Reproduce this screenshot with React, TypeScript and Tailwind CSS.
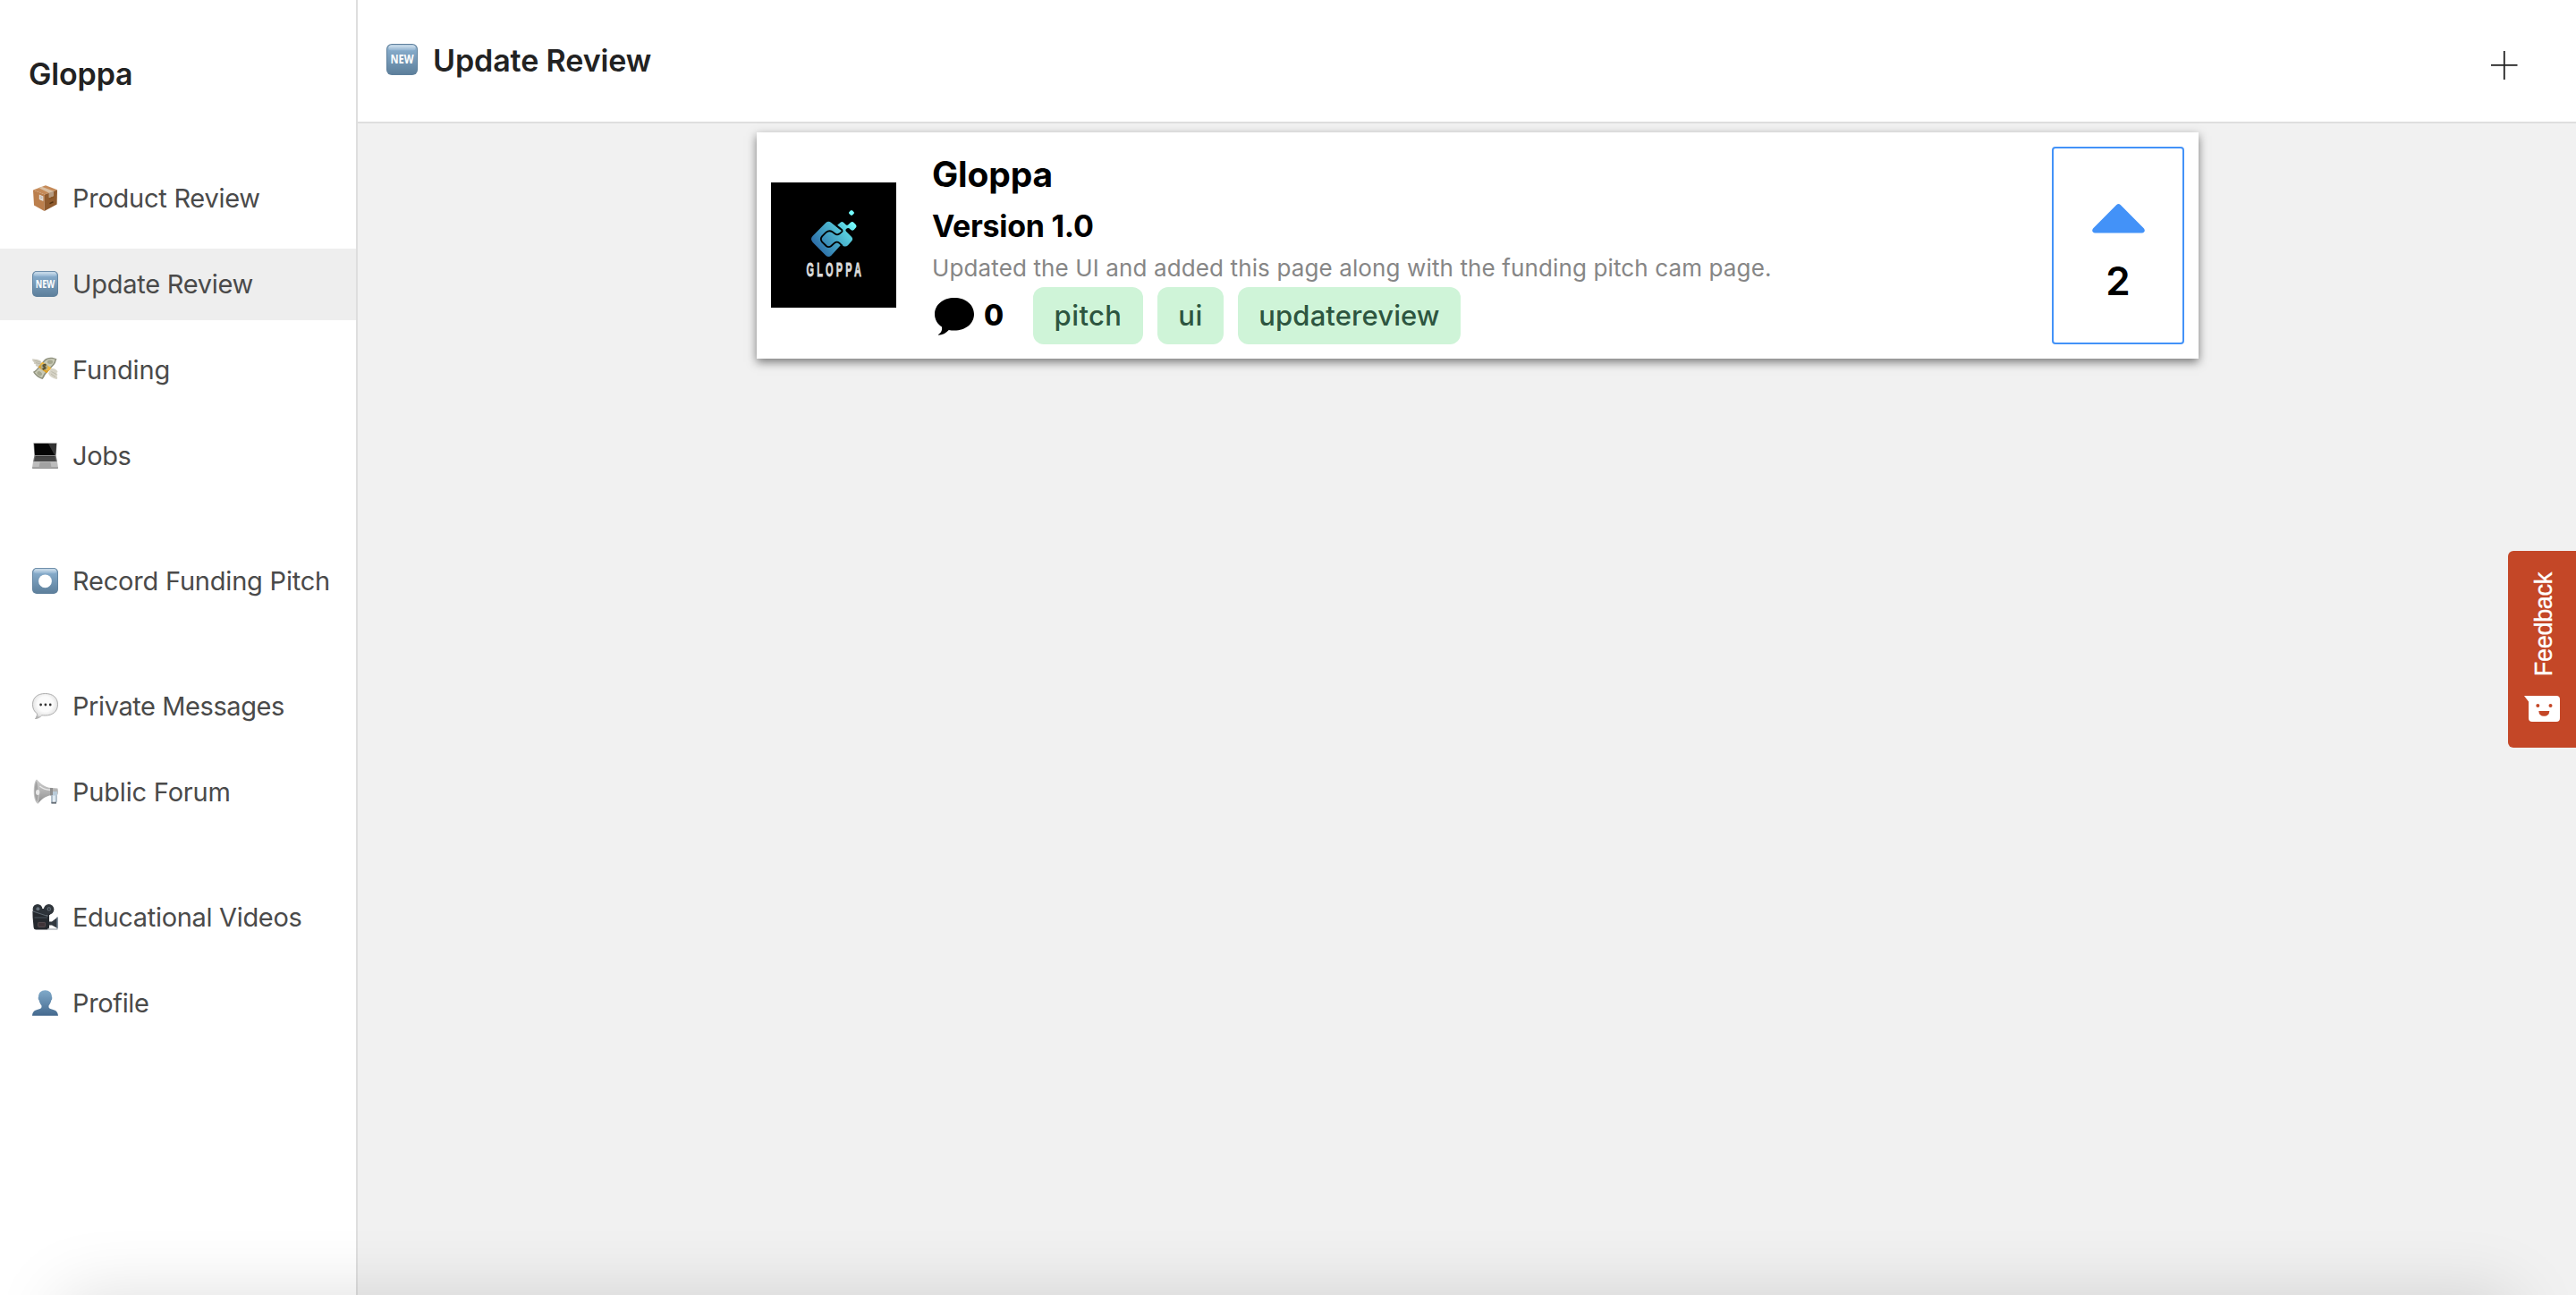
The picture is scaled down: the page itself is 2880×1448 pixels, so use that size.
import type { ReactNode } from "react";

type IconProps = { className?: string };

function BlueTile({ id, children, className }: { id: string; children: ReactNode; className?: string }) {
  return (
    <svg viewBox="0 0 29 29" className={className}>
      <defs>
        <linearGradient id={id} x1="0" y1="0" x2="0" y2="1">
          <stop offset="0" stopColor="#9fbdd6" />
          <stop offset="0.2" stopColor="#84a9c8" />
          <stop offset="1" stopColor="#5d7f9b" />
        </linearGradient>
        <linearGradient id={`${id}-gloss`} x1="0" y1="0" x2="0" y2="1">
          <stop offset="0" stopColor="#d3e2ee" />
          <stop offset="1" stopColor="#8fb2d0" />
        </linearGradient>
      </defs>
      <rect x="0" y="0" width="29" height="29" rx="5" fill="#5f809c" />
      <rect x="0.8" y="0.8" width="27.4" height="27.4" rx="4.4" fill={`url(#${id})`} />
      <rect x="2" y="1.2" width="25" height="5" rx="2.5" fill={`url(#${id}-gloss)`} />
      {children}
    </svg>
  );
}

function NewIcon({ className, id = "new" }: IconProps & { id?: string }) {
  return (
    <BlueTile id={id} className={className}>
      <text x="14.5" y="18.6" textAnchor="middle" textLength="21.6" lengthAdjust="spacingAndGlyphs" fontSize="11.6" fontWeight="700" fill="#fff" className="font-['Open_Sans',sans-serif]">
        NEW
      </text>
    </BlueTile>
  );
}

function RecordIcon({ className }: IconProps) {
  return (
    <BlueTile id="record" className={className}>
      <circle cx="14.5" cy="14.8" r="7.4" fill="#fff" />
    </BlueTile>
  );
}

function PackageIcon({ className }: IconProps) {
  return (
    <svg viewBox="0 0 29 29" className={className}>
      <path d="M15 0.3 L28 5.2 L14 10.5 L1 5.4Z" fill="#c58a58" />
      <path d="M1 5.4 L14 10.5 L13.6 29 L2 22.4Z" fill="#bb7f4d" />
      <path d="M28 5.2 L14 10.5 L13.6 29 L27.6 21.6Z" fill="#8f5b2f" />
      <path d="M7.2 3 L10.8 1.7 L24 6.7 L24 12 L18.8 14 L18.8 8.7Z" fill="#d9bfa3" />
      <path d="M18.8 8.7 L24 6.7 L24 12 L18.8 14Z" fill="#b59a80" />
      <path d="M7.8 10.6 L12.4 12.4 L12.4 18 L7.8 16Z" fill="#e4dfda" />
      <path d="M9 12.6 L11.4 13.5 M9 14.2 L11.4 15.1" stroke="#a9a09a" strokeWidth="0.7" />
      <path d="M19.5 20.6 L23.5 18.7" stroke="#55330f" strokeWidth="1.5" />
      <path d="M19 15.6 L24.5 13.2" stroke="#80501f" strokeWidth="0.8" />
    </svg>
  );
}

function MoneyIcon({ className }: IconProps) {
  return (
    <svg viewBox="0 0 29 29" className={className}>
      <path d="M0.3 2.2 C4 3 8.5 2.4 10.2 5.6 L11.4 10.5 L6.5 11 C3 10.2 3.6 8.6 4.6 8.4 C1.6 8.2 1.4 6.8 2.4 6 C0.4 5.4 0 4 0.3 2.2Z" fill="#cfccbf" />
      <path d="M2.5 4 L9 6 M4 6.6 L9.6 8" stroke="#a9a797" strokeWidth="0.6" />
      <path d="M21 13 C25 12.4 28 14.5 28.6 17 L27 18 C29 19.5 28.6 20.8 27.2 21 C28.6 22.4 28.4 24.2 27.6 25 C24 24.6 20 22.6 18 18.6Z" fill="#d6d3c6" />
      <path d="M21.5 16.5 L27 19.5 M21 19 L26 22.5" stroke="#a9a797" strokeWidth="0.6" />
      <path d="M13.4 3.6 C17 -0.2 23 0.2 27.6 2.4 C26 4 27 6 24.8 8.4 L15.4 19 C13.4 21.4 13.6 23.2 11.6 24.9 C7.4 24 3 20.6 1 16.8 C3.6 15.6 5 13.4 7 11.2Z" fill="#8e907d" />
      <path d="M14.6 4.6 C17.6 1.6 22 1.4 25.6 2.8 C24.8 4.4 25 6 23.4 8 L13.6 18.6 C12 20.6 12 22 11 23.2 C7.6 22 4.4 19.6 2.8 17.2 C5 16 6.4 13.8 8 12Z" fill="#c9cab6" />
      <ellipse cx="20" cy="5.8" rx="3" ry="2.2" fill="#a5a78f" />
      <ellipse cx="8.2" cy="18.6" rx="3" ry="2.2" transform="rotate(40 8.2 18.6)" fill="#a5a78f" />
      <path d="M8.6 9 L11.4 5.8 L21.4 12.4 L18.4 15.9Z" fill="#f0b73a" />
      <path d="M8.6 9.6 L18 16.3 L16.2 18.2 L6.8 11.6Z" fill="#e0a023" />
      <ellipse cx="13.6" cy="11.2" rx="3.8" ry="3.5" fill="#b3ad86" />
      <path d="M15.6 9.2 C13.6 8 11.6 9 12.2 10.4 C12.8 11.8 15.4 10.8 15 12.6 C14.6 14 12.4 13.8 11.4 12.8 M14.9 7.8 L12.4 14.6" fill="none" stroke="#51482a" strokeWidth="1.2" />
    </svg>
  );
}

function LaptopIcon({ className }: IconProps) {
  return (
    <svg viewBox="0 0 29 29" className={className}>
      <path d="M1.4 0.3 H27.6 L26.6 14.8 H2.4Z" fill="#8d8d8d" />
      <path d="M2.2 1 H26.8 L26 14 H3Z" fill="#050505" />
      <path d="M18 1 H26.8 L26 14 H25Z" fill="#333" />
      <path d="M2.4 14.4 H26.6 L28 21.4 H1Z" fill="#707070" />
      <path d="M3.6 15 H25.4 L26.6 20.6 H2.4Z" fill="#3b3b3b" />
      <path d="M3 17 H26 M2.7 18.8 H26.4" stroke="#666" strokeWidth="0.5" />
      <path d="M1 21.2 H28 L29 28 Q29 28.9 28 28.9 H1 Q0 28.9 0 28Z" fill="#bdbdbd" />
      <path d="M8.6 21.8 H20.4 L21.4 27 H7.6Z" fill="#a2a2a2" />
      <path d="M0 27.6 H29 V28.2 Q29 28.9 28 28.9 H1 Q0 28.9 0 28.2Z" fill="#8f8f8f" />
    </svg>
  );
}

function MessageIcon({ className }: IconProps) {
  return (
    <svg viewBox="0 0 29 29" className={className}>
      <defs>
        <radialGradient id="bubble" cx="0.5" cy="0.42" r="0.6">
          <stop offset="0.5" stopColor="#fbfbfb" />
          <stop offset="0.85" stopColor="#e2e2e2" />
          <stop offset="1" stopColor="#b5b5b5" />
        </radialGradient>
      </defs>
      <path d="M14.5 0.5 C23 0.5 28.5 5 28.5 12.8 C28.5 20.5 23 25 14.5 25 C13 25 12 25 10.8 24.8 C9 27 6.4 28.4 3.4 28.6 C5 27 5.6 25 5.4 22.8 C2 20.6 0.5 17 0.5 12.8 C0.5 5 6 0.5 14.5 0.5Z" fill="url(#bubble)" stroke="#adadad" strokeWidth="1" />
      <circle cx="9.6" cy="13" r="1.4" fill="#333" />
      <circle cx="14.9" cy="13" r="1.4" fill="#333" />
      <circle cx="20.2" cy="13" r="1.4" fill="#333" />
    </svg>
  );
}

function MegaphoneIcon({ className }: IconProps) {
  return (
    <svg viewBox="0 0 29 29" className={className}>
      <defs>
        <linearGradient id="horn" x1="0" y1="0" x2="0" y2="1">
          <stop offset="0" stopColor="#cfcfcf" />
          <stop offset="0.45" stopColor="#b4b4b4" />
          <stop offset="1" stopColor="#8c8c8c" />
        </linearGradient>
      </defs>
      <path d="M22.2 14 H27 V25 L26 26.5 H22 V15.5" fill="none" stroke="#9fb0be" strokeWidth="1.6" />
      <path d="M23.2 15 H25.8 V24.6 H23.2Z" fill="#dbe8f2" />
      <path d="M21.5 25.8 H27 V27.6 H21.5Z" fill="#666e75" />
      <path d="M5 0.4 C8.6 3.4 12 9.4 22.4 10 L28.4 10.6 C29 12 29 16 28.4 17.4 L22 18 C14 19 9.4 24 6.4 27.8Z" fill="url(#horn)" />
      <path d="M22 14 H28 V18.500 H22Z" fill="#b9cbd9" />
      <path d="M20 10 L23 10.1 V18 L20 18.4Z" fill="#8d8d8d" />
      <path d="M8.4 8 C12 11 15 12 20 12.2" fill="none" stroke="#e8e8e8" strokeWidth="1.6" />
      <path d="M5 0.4 C8.4 6 8.8 20 6.4 27.8 C3 26.2 1.4 19 1.8 12 C2 6 3.2 1.6 5 0.4Z" fill="#c5c5c5" />
      <path d="M4.8 2.4 C7 8 7.2 20 5.6 25.6 C3.4 23 2.4 17 2.7 12 C2.9 7.4 3.6 4 4.8 2.4Z" fill="#a2a2a2" />
      <ellipse cx="6.2" cy="15" rx="2.2" ry="3" fill="#e8e8e8" />
    </svg>
  );
}

function MovieCameraIcon({ className }: IconProps) {
  return (
    <svg viewBox="0 0 29 29" className={className}>
      <circle cx="6" cy="5.4" r="5.4" fill="#2d3339" />
      <circle cx="18.6" cy="5.8" r="5.8" fill="#30363c" />
      <path d="M4 5 H20 V12 H4Z" fill="#2d3339" />
      <circle cx="6.4" cy="5.2" r="2" fill="#66717b" />
      <circle cx="18.8" cy="5.4" r="2.2" fill="#66717b" />
      <circle cx="18.8" cy="5.4" r="1" fill="#22262a" />
      <path d="M0.4 7.4 L17 12.4 L19 10 L19 26 Q19 28.4 16.6 28.4 H4 Q1.6 28.4 1.6 26 L0.6 15Z" fill="#25292e" />
      <path d="M1 8 L17.6 13.4" stroke="#5d6770" strokeWidth="1.1" />
      <path d="M2.4 15 H17" stroke="#48515a" strokeWidth="1.1" />
      <rect x="6.6" y="20.4" width="8" height="5" rx="0.8" fill="#3f3438" stroke="#66595b" strokeWidth="0.7" />
      <path d="M19 19.4 L22 19.6 L28.4 14.6 V27 L22 23.6 H19Z" fill="#31383f" />
      <path d="M28 14.4 V27.4" stroke="#6f8193" strokeWidth="1.3" />
      <path d="M17 28 H28.4" stroke="#a8adb3" strokeWidth="1.3" />
    </svg>
  );
}

function PersonIcon({ className }: IconProps) {
  return (
    <svg viewBox="0 0 29 29" className={className}>
      <defs>
        <linearGradient id="person" x1="0" y1="0" x2="0" y2="1">
          <stop offset="0" stopColor="#80aaca" />
          <stop offset="1" stopColor="#44698e" />
        </linearGradient>
      </defs>
      <path d="M14.5 0.2 C19 0.2 22 3.2 21.9 7.6 C22.6 8 22.4 11 21.3 11.6 C20.9 14 20 15.6 18.6 17.2 C18.2 19.6 18.8 20.4 20.4 21 C24.6 22.3 28.6 22.6 29 28.8 H0 C0.4 22.6 4.4 22.3 8.6 21 C10.2 20.4 10.8 19.6 10.4 17.2 C9 15.6 8.1 14 7.7 11.6 C6.6 11 6.4 8 7.1 7.6 C7 3.2 10 0.2 14.5 0.2Z" fill="url(#person)" />
    </svg>
  );
}

function GloppaLogo() {
  return (
    <svg viewBox="0 0 140 140" className="size-[140px] bg-black">
      <defs>
        <linearGradient id="mark" gradientUnits="userSpaceOnUse" x1="55" y1="165" x2="175" y2="75">
          <stop offset="0" stopColor="#2b6aa6" />
          <stop offset="0.45" stopColor="#45a5c5" />
          <stop offset="0.8" stopColor="#5ad2e0" />
          <stop offset="1" stopColor="#74fbfd" />
        </linearGradient>
      </defs>
      <g transform="translate(34 22) scale(0.3333)">
        <path d="M82 69 Q91 61 100 69 L130 93 L140 96 L150 98 L168 116 Q175 124 168 131 L156 145 Q148 152 139 146 L134 142 L100 179 Q91 187 82 179 L38 135 Q28 124 38 113Z" fill="url(#mark)" />
        <path d="M121 84 Q118 80 122 76 L131 68 Q136 64 141 68 L149 76 Q153 79 157 76 L165 68 Q171 63 176 69 L182 75 Q187 81 182 86 L176 93 Q171 98 166 93 L160 88 Q156 85 151 89 Q146 93 150 99 L138 98Z" fill="url(#mark)" />
        <path d="M118 79 L133 91 Q140 96 134 101 L128 106 Q120 112 112 106 L104 100 Q93 93 83 101 L69 115 Q62 124 69 133 L83 147 Q91 154 100 147 L111 137 Q119 131 127 137 L137 147" fill="none" stroke="#000" strokeWidth="5.5" />
        <rect x="160.5" y="28.5" width="15" height="15" rx="4" transform="rotate(45 168 36)" fill="#74fbfd" />
      </g>
      <text transform="translate(39.5 105.3) scale(0.5 1)" textLength="123" fontSize="22" fontWeight="700" fill="#dcdcdc" stroke="#dcdcdc" strokeWidth="0.8" className="font-['Liberation_Sans',sans-serif]">
        GLOPPA
      </text>
    </svg>
  );
}

function CommentIcon() {
  return (
    <svg viewBox="0 0 44 42" className="mt-[2px] h-[42px] w-[44px]">
      <path d="M22 0 C34.5 0 44 7.6 44 18.3 C44 29 34.5 36.6 22 36.6 C19.8 36.6 17.7 36.4 15.8 36 C12.8 39.5 8.5 41.6 4 41.8 C4 41 4.3 40.7 4.8 40.4 C7.6 38.8 8.6 36 8 32.6 C3 29.3 0 24.2 0 18.3 C0 7.6 9.5 0 22 0Z" fill="#000" />
    </svg>
  );
}

type NavItem = { label: string; Icon: (p: IconProps) => ReactNode; tracking: string; active?: boolean };

const sections: NavItem[][] = [
  [
    { label: "Product Review", Icon: PackageIcon, tracking: "tracking-[-0.26px]" },
    { label: "Update Review", Icon: NewIcon, tracking: "tracking-[-0.28px]", active: true },
    { label: "Funding", Icon: MoneyIcon, tracking: "tracking-[-0.14px]" },
    { label: "Jobs", Icon: LaptopIcon, tracking: "tracking-[-0.4px]" },
  ],
  [{ label: "Record Funding Pitch", Icon: RecordIcon, tracking: "tracking-[-0.21px]" }],
  [
    { label: "Private Messages", Icon: MessageIcon, tracking: "tracking-[-0.42px]" },
    { label: "Public Forum", Icon: MegaphoneIcon, tracking: "tracking-[-0.19px]" },
  ],
  [
    { label: "Educational Videos", Icon: MovieCameraIcon, tracking: "tracking-[-0.33px]" },
    { label: "Profile", Icon: PersonIcon, tracking: "tracking-[-0.35px]" },
  ],
];

function Sidebar() {
  return (
    <aside className="flex w-[400px] shrink-0 flex-col border-r-2 border-[#dedede] bg-white pt-[63px]">
      <h1 className="pl-8 text-[34px] leading-10 font-semibold tracking-[-0.16px] text-[#222]">Gloppa</h1>
      <nav className="mt-[79px] flex flex-col gap-[60px]">
        {sections.map((items, i) => (
          <div key={i} className="flex flex-col gap-4">
            {items.map(({ label, Icon, tracking, active }) => (
              <a key={label} className={`flex h-20 items-center gap-4 pl-9 whitespace-nowrap ${active ? "bg-[#eee]" : ""}`}>
                <Icon className="mb-px size-[29px]" />
                <span className={`text-[29px] leading-10 text-[#4a4a4a] ${tracking}`}>{label}</span>
              </a>
            ))}
          </div>
        ))}
      </nav>
    </aside>
  );
}

function Tag({ children, className }: { children: ReactNode; className: string }) {
  return (
    <span className={`flex h-16 items-center justify-center rounded-xl bg-[#cff4d8] text-[31px] font-medium text-[#2d5540] ${className}`}>
      {children}
    </span>
  );
}

function UpdateCard() {
  return (
    <article className="flex h-[253px] w-[1612px] bg-white p-4 shadow-[0_4px_10px_rgba(0,0,0,0.5)]">
      <div className="flex items-center pb-px">
        <GloppaLogo />
      </div>
      <div className="flex flex-1 flex-col pt-[7px] pl-10 text-black">
        <h2 className="text-[39px] leading-[48px] font-bold tracking-[-0.16px]">Gloppa</h2>
        <h3 className="mt-3 text-[34px] leading-[44px] font-bold tracking-[-0.28px]">Version 1.0</h3>
        <p className="mt-[9px] text-[26px] leading-8 tracking-[0.125px] text-[#868686]">
          Updated the UI and added this page along with the funding pitch cam page.
        </p>
        <div className="mt-[5px] flex items-center gap-4 pl-[3px]">
          <div className="flex w-[94px] items-center gap-[11px]">
            <CommentIcon />
            <span className="text-[32px] leading-[64px] font-extrabold">0</span>
          </div>
          <Tag className="w-[123px] tracking-[0.4px]">pitch</Tag>
          <Tag className="w-[74px] tracking-[0.5px]">ui</Tag>
          <Tag className="w-[249px] tracking-[0.1px]">updatereview</Tag>
        </div>
      </div>
      <button className="flex w-[148px] flex-col items-center rounded border-2 border-[#4392f8] pt-[62px]">
        <svg viewBox="0 0 59 33" className="h-[33px] w-[59px]">
          <path d="M27.3 1 Q29.5 -0.8 31.7 1 L58 27.6 Q59.6 30 58 31.6 Q57.3 32.5 55.5 32.5 H3.5 Q1.7 32.5 1 31.6 Q-0.6 30 1 27.6Z" fill="#4392f8" />
        </svg>
        <span className="mt-[27px] text-[44px] leading-[52px] font-semibold text-black">2</span>
      </button>
    </article>
  );
}

function FeedbackTab() {
  return (
    <div className="absolute top-[616px] right-0 flex h-[220px] w-[76px] flex-col items-center rounded-l-md bg-[#c44727] pt-6">
      <span className="mr-[-3px] rotate-180 text-[27px] leading-[30px] tracking-[-0.3px] text-white [writing-mode:vertical-rl] [-webkit-text-stroke:0.4px_white] font-['Liberation_Sans',sans-serif]">
        Feedback
      </span>
      <svg viewBox="0 0 40 29" className="mt-[22px] h-[29px] w-10">
        <path d="M0 0 H36 Q40 0 40 4 V25 Q40 29 36 29 H9 Q5 29 5 25 V6.5Z" fill="#fff" />
        <circle cx="15.3" cy="11" r="2" fill="#c44727" />
        <circle cx="29.5" cy="11" r="2" fill="#c44727" />
        <path d="M16.3 17 H28.3 Q28 22.8 22.3 22.8 Q16.6 22.8 16.3 17Z" fill="#c44727" />
      </svg>
    </div>
  );
}

export default function App() {
  return (
    <div className="relative flex h-[1448px] w-[2880px] overflow-hidden bg-[#f1f1f1] font-['Inter',sans-serif]">
      <Sidebar />
      <main className="flex flex-1 flex-col">
        <header className="flex h-[138px] items-start justify-between border-b-2 border-[#dedede] bg-white pr-[65px] pl-8">
          <div className="flex items-start gap-[17px] pt-12">
            <NewIcon id="new-header" className="mt-px size-[35px]" />
            <h2 className="text-[34px] leading-10 font-semibold tracking-[-0.1px] text-[#222]">Update Review</h2>
          </div>
          <svg viewBox="0 0 32 34" className="mt-[56px] h-[34px] w-8" fill="none" stroke="#222" strokeWidth="1.8">
            <path d="M16.8 1 V33 M2 16.8 H31.5" />
          </svg>
        </header>
        <div className="flex justify-center pt-[10px] pl-6">
          <UpdateCard />
        </div>
      </main>
      <FeedbackTab />
      <div className="pointer-events-none absolute top-full right-[70px] left-[70px] h-[200px] shadow-[0_0_80px_rgba(0,0,0,0.134)]" />
    </div>
  );
}
